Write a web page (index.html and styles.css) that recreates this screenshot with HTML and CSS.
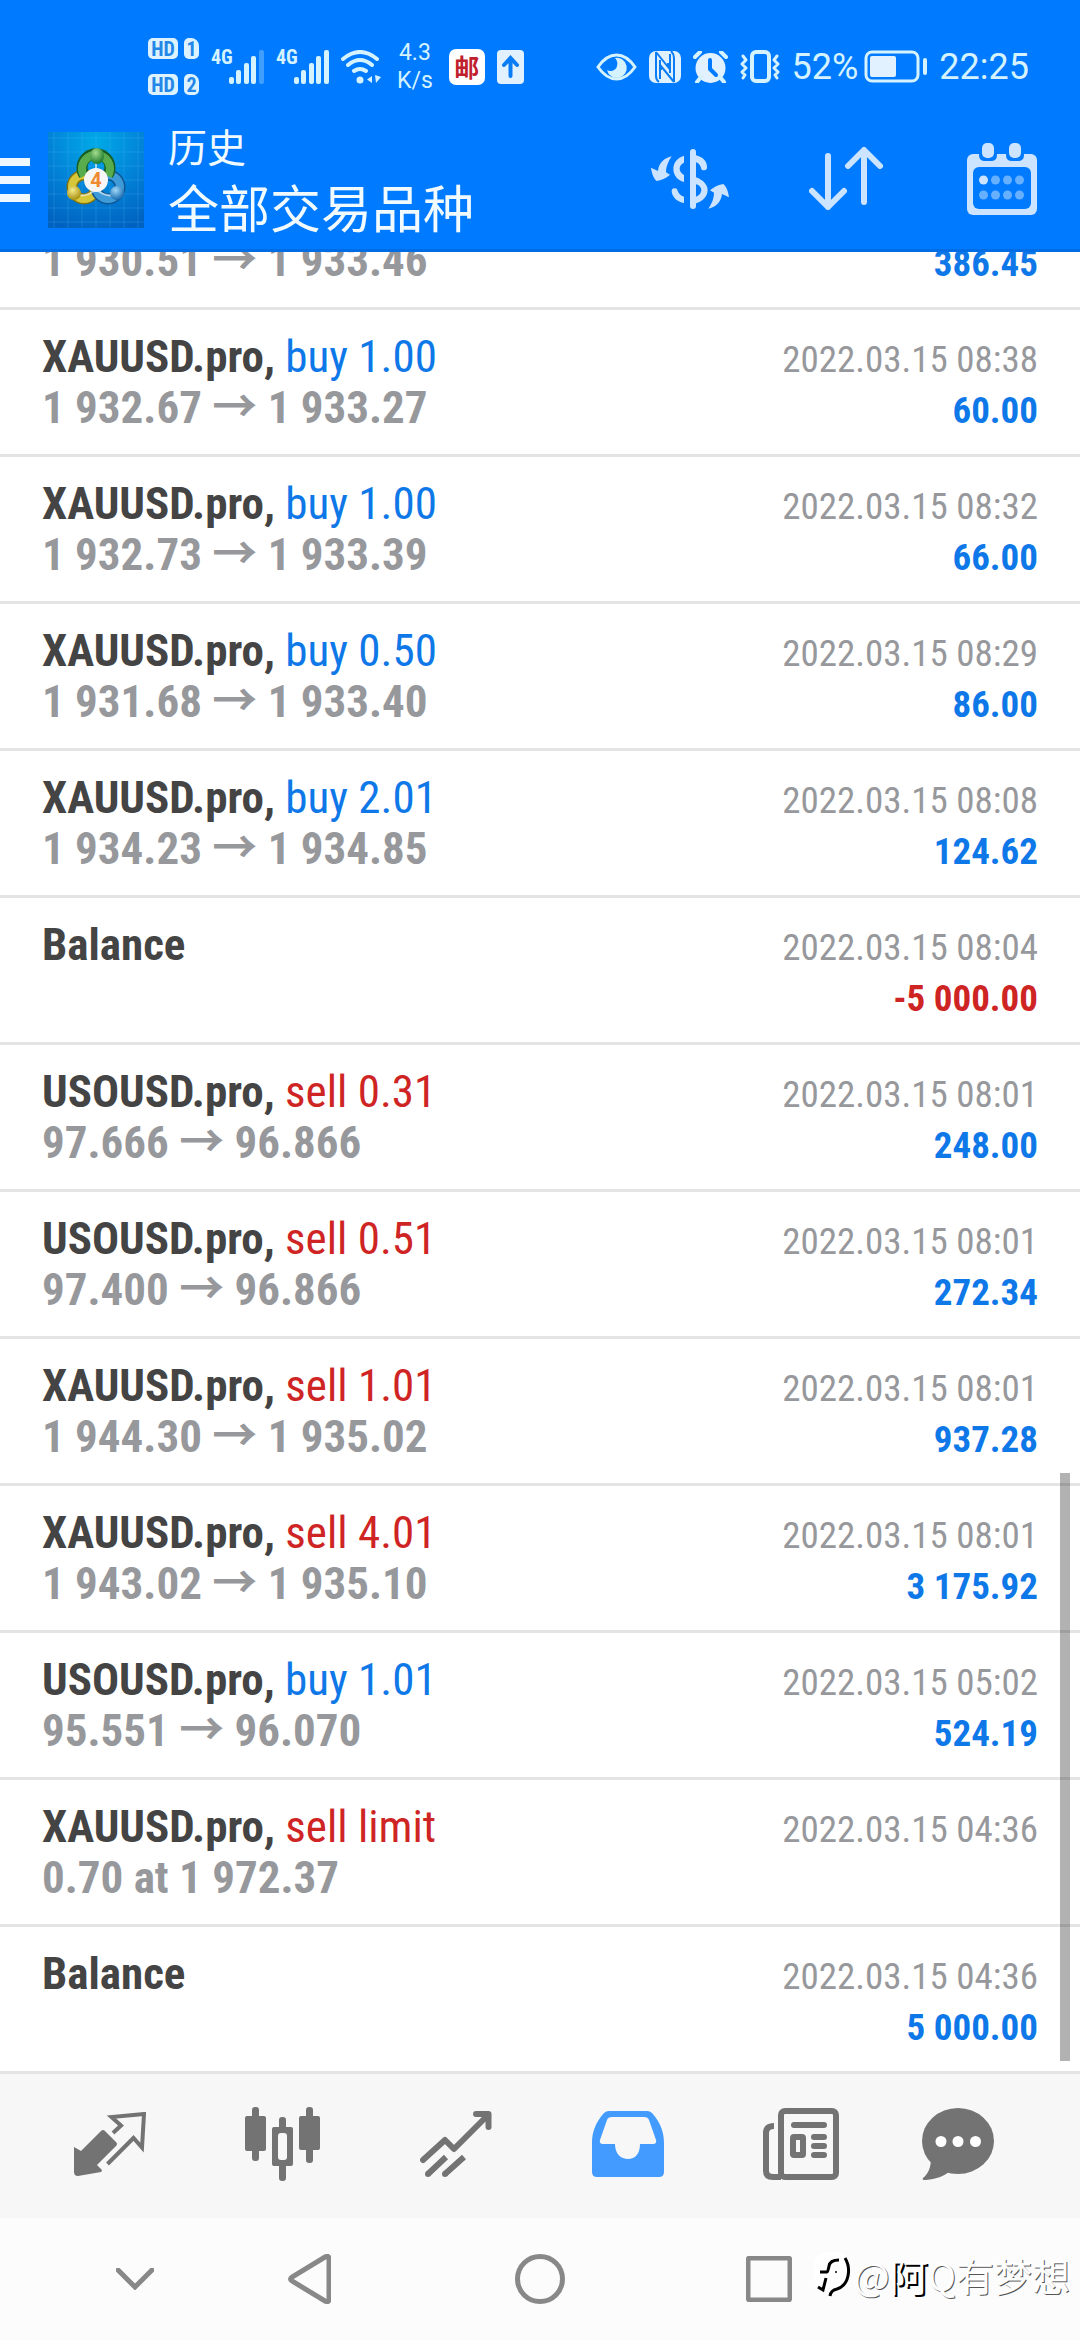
FILE: index.html
```html
<!DOCTYPE html>
<html lang="zh-CN">
<head>
<meta charset="utf-8">
<meta name="viewport" content="width=device-width">
<title>历史</title>
<link rel="stylesheet" href="styles.css">
</head>
<body>
<header class="header">
  <div class="status">
    <div class="status-group">
      <div class="hd-list">
        <div class="hd"><span class="hd-tag">HD</span><span class="hd-sim">1</span></div>
        <div class="hd"><span class="hd-tag">HD</span><span class="hd-sim">2</span></div>
      </div>
      <div class="signal"><span class="net">4G</span>
        <svg width="35" height="34" viewBox="0 0 35 34" fill="currentColor"><rect y="27" width="5" height="7" rx="2"/><rect x="7" y="20" width="5" height="14" rx="2"/><rect x="15" y="13" width="5" height="21" rx="2"/><rect x="22" y="6" width="5" height="28" rx="2"/><rect x="30" width="5" height="34" rx="2" opacity=".3"/></svg>
      </div>
      <div class="signal"><span class="net">4G</span>
        <svg width="35" height="34" viewBox="0 0 35 34" fill="currentColor"><rect y="27" width="5" height="7" rx="2"/><rect x="7" y="20" width="5" height="14" rx="2"/><rect x="15" y="13" width="5" height="21" rx="2"/><rect x="22" y="6" width="5" height="28" rx="2"/><rect x="30" width="5" height="34" rx="2"/></svg>
      </div>
      <svg width="40" height="34" viewBox="0 0 40 34" fill="none" stroke="currentColor" stroke-width="4" stroke-linecap="round"><path d="M2 9Q19-5 36 9M7 15Q19 5 31 15M13 21Q19 17 25 21"/><circle cx="19" cy="30" r="3.5" fill="currentColor" stroke="none"/><path d="M31 26v7l-5-3.500zM34 25l6 2-5 6z" fill="currentColor" stroke="none"/></svg>
      <div class="speed"><span>4.3</span><span>K/s</span></div>
      <span class="mail">邮</span>
      <svg width="27" height="34" viewBox="0 0 27 34"><rect width="27" height="34" rx="4" fill="#e2f1ff"/><path d="M13.500 26V9M7 15l6.500-7 6.500 7" fill="none" stroke="#0a7cf5" stroke-width="4" stroke-linecap="round"/></svg>
    </div>
    <div class="status-group">
      <svg width="41" height="28" viewBox="0 0 41 28"><path d="M2 14C13-2 28-2 39 14C28 30 13 30 2 14z" fill="none" stroke="currentColor" stroke-width="3"/><path d="M19 5a10 10 0 1 1-8 12c3 2 9 1 10-4c1-3 0-6-2-8z" fill="currentColor"/></svg>
      <svg width="32" height="32" viewBox="0 0 32 32"><rect width="32" height="32" rx="7" fill="#e0f2ff"/><path d="M7 1L19 16V12M7 1V25Q7 29 10 31M25 31L12 15V19M25 31V7Q25 3 22 0M11 9V28M21 3V22" fill="none" stroke="#0a7cf5" stroke-width="2"/></svg>
      <svg width="35" height="32" viewBox="0 0 35 32"><circle cx="17.500" cy="17" r="15" fill="#e2f1ff"/><path d="M2 6l5-5M33 6l-5-5M4 31l4-5M31 31l-4-5" stroke="currentColor" stroke-width="4" stroke-linecap="round"/><path d="M17 9v9l6 6" fill="none" stroke="#007aff" stroke-width="4" stroke-linecap="round" stroke-linejoin="round"/></svg>
      <svg width="40" height="33" viewBox="0 0 40 33" fill="none" stroke="currentColor" stroke-linecap="round" stroke-linejoin="round"><rect x="12" y="2" width="17" height="29" rx="4" stroke-width="4"/><path d="M3 6l3 4-4 4 4 4-4 4 3 3-2 3M37 6l-3 4 4 4-4 4 4 4-3 3 2 3" stroke-width="3"/></svg>
      <div class="battery"><span>52%</span>
        <svg width="63" height="33" viewBox="0 0 63 33"><rect x="2" y="2" width="52" height="29" rx="6" fill="none" stroke="currentColor" stroke-width="3"/><rect x="6" y="6" width="26" height="21" rx="2" fill="#e2f1ff"/><rect x="59" y="8" width="4" height="17" rx="2" fill="currentColor"/></svg>
      </div>
      <time>22:25</time>
    </div>
  </div>
  <div class="appbar">
    <button class="icon-button" aria-label="菜单"><svg width="30" height="44" viewBox="0 0 30 44" fill="#eff8ff"><path d="M0 0h30v8H0zM0 18h30v8H0zM0 36h30v8H0z"/></svg></button>
    <svg class="logo" width="96" height="96" viewBox="0 0 96 96">
      <defs>
        <radialGradient id="sky" cx=".5" cy=".1" r=".95"><stop offset="0" stop-color="#00aae8"/><stop offset=".5" stop-color="#0284d8"/><stop offset="1" stop-color="#0062c0"/></radialGradient>
        <radialGradient id="green" cx=".4" cy=".3" r=".7"><stop offset="0" stop-color="#a5dc8e"/><stop offset="1" stop-color="#1c7a2c"/></radialGradient>
        <radialGradient id="gold" cx=".4" cy=".3" r=".7"><stop offset="0" stop-color="#f4eb8c"/><stop offset="1" stop-color="#a88f10"/></radialGradient>
        <radialGradient id="blue" cx=".4" cy=".3" r=".7"><stop offset="0" stop-color="#9fd8f8"/><stop offset="1" stop-color="#1669b0"/></radialGradient>
      </defs>
      <path fill="url(#sky)" d="M0 0h96v96H0z"/>
      <path d="M6 0v96M20 0v96M34 0v96M48 0v96M62 0v96M76 0v96M90 0v96M0 6h96M0 20h96M0 34h96M0 48h96M0 62h96M0 76h96M0 90h96" stroke="#5cc0ff" stroke-opacity=".22"/>
      <g fill="none" stroke-width="8">
        <circle cx="36" cy="55" r="12" stroke="#84730c" stroke-width="11"/><circle cx="36" cy="55" r="12" stroke="#d5c63a"/>
        <circle cx="60" cy="55" r="12" stroke="#0f5591" stroke-width="11"/><circle cx="60" cy="55" r="12" stroke="#3f9bd8"/>
        <path d="M36 43A14 14 0 1 1 60 43" stroke="#175f22" stroke-width="11"/><path d="M36 44A14 14 0 1 1 60 44" stroke="#58ac4e"/>
      </g>
      <path d="M28 62q7 4 18-3M68 62q-7 4-18-3M48 27v12" fill="none" stroke="#fff" stroke-opacity=".6" stroke-width="2"/>
      <ellipse cx="49" cy="24" rx="7" ry="8" fill="url(#green)"/>
      <circle cx="26" cy="61" r="7" fill="url(#gold)"/>
      <circle cx="69" cy="61" r="7" fill="url(#blue)"/>
      <circle cx="48" cy="48" r="12" fill="#f6f6f6"/>
      <text class="logo-digit" x="48" y="55" text-anchor="middle">4</text>
    </svg>
    <div class="titles"><h1 class="title">历史</h1><p class="subtitle">全部交易品种</p></div>
    <div class="actions">
      <button class="icon-button" aria-label="交易品种"><svg width="78" height="60" viewBox="183 324 234 180" fill="#cce4ff"><rect x="300" y="324" width="18" height="180" rx="9"/><path id="swoosh" d="M245 346C225 350 206 365 204 390L183 380C185 395 190 412 200 420C213 418 228 412 240 401L228 394C228 375 236 360 245 346z"/><use href="#swoosh" transform="rotate(180 300 424.500)"/><path d="M282 344C262 350 250 365 250 383C250 402 262 417 282 423V402C274 398 269 390 269 383C269 375 274 368 282 365zM282 486C262 482 248 470 245 452a9 9 0 0 1 18-2C266 458 272 464 282 467zM318 343C338 348 351 360 351 378a9 9 0 0 1-18 2C330 372 326 366 318 364zM318 409C340 417 353 432 353 447C353 466 338 481 318 487V467C328 463 334 456 334 447C334 440 328 432 318 430z"/></svg></button>
      <button class="icon-button" aria-label="排序"><svg width="74" height="64" viewBox="0 0 74 64" fill="none" stroke="#cce4ff" stroke-width="6" stroke-linecap="round" stroke-linejoin="round"><path d="M19 9V60M3 44l16 16 16-16M55 55V4M39 19L55 3l16 16"/></svg></button>
      <button class="icon-button" aria-label="日期"><svg width="70" height="72" viewBox="0 0 70 72"><rect y="11" width="70" height="61" rx="6" fill="#cce4ff"/><path d="M12 10h18v2q0 6-6 6h-6q-6 0-6-6zM39 10h18v2q0 6-6 6h-6q-6 0-6-6z" fill="#007aff"/><rect x="15" width="12" height="15" rx="5" fill="#cce4ff"/><rect x="42" width="12" height="15" rx="5" fill="#cce4ff"/><rect x="6" y="24" width="58" height="42" rx="6" fill="#007aff"/><circle cx="16.500" cy="37" r="4.500" fill="#cce4ff"/><g fill="#66b0ff"><circle cx="28.500" cy="37" r="4.500"/><circle cx="40.500" cy="37" r="4.500"/><circle cx="52.500" cy="37" r="4.500"/><circle cx="16.500" cy="52" r="4.500"/><circle cx="28.500" cy="52" r="4.500"/><circle cx="40.500" cy="52" r="4.500"/><circle cx="52.500" cy="52" r="4.500"/></g></svg></button>
    </div>
  </div>
</header>

<main class="history">
  <ul class="deals">
    <li class="deal deal-partial"><div class="main"><p class="prices">1 930.51 → 1 933.46</p></div><div class="side"><strong class="buy">386.45</strong></div></li>
    <li class="deal"><div class="main"><p class="symbol">XAUUSD.pro, <span class="buy">buy 1.00</span></p><p class="prices">1 932.67 → 1 933.27</p></div><div class="side"><time>2022.03.15 08:38</time><strong class="buy">60.00</strong></div></li>
    <li class="deal"><div class="main"><p class="symbol">XAUUSD.pro, <span class="buy">buy 1.00</span></p><p class="prices">1 932.73 → 1 933.39</p></div><div class="side"><time>2022.03.15 08:32</time><strong class="buy">66.00</strong></div></li>
    <li class="deal"><div class="main"><p class="symbol">XAUUSD.pro, <span class="buy">buy 0.50</span></p><p class="prices">1 931.68 → 1 933.40</p></div><div class="side"><time>2022.03.15 08:29</time><strong class="buy">86.00</strong></div></li>
    <li class="deal"><div class="main"><p class="symbol">XAUUSD.pro, <span class="buy">buy 2.01</span></p><p class="prices">1 934.23 → 1 934.85</p></div><div class="side"><time>2022.03.15 08:08</time><strong class="buy">124.62</strong></div></li>
    <li class="deal"><div class="main"><p class="symbol">Balance</p></div><div class="side"><time>2022.03.15 08:04</time><strong class="sell">-5 000.00</strong></div></li>
    <li class="deal"><div class="main"><p class="symbol">USOUSD.pro, <span class="sell">sell 0.31</span></p><p class="prices">97.666 → 96.866</p></div><div class="side"><time>2022.03.15 08:01</time><strong class="buy">248.00</strong></div></li>
    <li class="deal"><div class="main"><p class="symbol">USOUSD.pro, <span class="sell">sell 0.51</span></p><p class="prices">97.400 → 96.866</p></div><div class="side"><time>2022.03.15 08:01</time><strong class="buy">272.34</strong></div></li>
    <li class="deal"><div class="main"><p class="symbol">XAUUSD.pro, <span class="sell">sell 1.01</span></p><p class="prices">1 944.30 → 1 935.02</p></div><div class="side"><time>2022.03.15 08:01</time><strong class="buy">937.28</strong></div></li>
    <li class="deal"><div class="main"><p class="symbol">XAUUSD.pro, <span class="sell">sell 4.01</span></p><p class="prices">1 943.02 → 1 935.10</p></div><div class="side"><time>2022.03.15 08:01</time><strong class="buy">3 175.92</strong></div></li>
    <li class="deal"><div class="main"><p class="symbol">USOUSD.pro, <span class="buy">buy 1.01</span></p><p class="prices">95.551 → 96.070</p></div><div class="side"><time>2022.03.15 05:02</time><strong class="buy">524.19</strong></div></li>
    <li class="deal"><div class="main"><p class="symbol">XAUUSD.pro, <span class="sell">sell limit</span></p><p class="prices">0.70 at 1 972.37</p></div><div class="side"><time>2022.03.15 04:36</time></div></li>
    <li class="deal"><div class="main"><p class="symbol">Balance</p></div><div class="side"><time>2022.03.15 04:36</time><strong class="buy">5 000.00</strong></div></li>
  </ul>
  <div class="scrollbar"></div>
</main>

<nav class="tabs">
  <button class="icon-button" aria-label="行情"><svg width="72" height="64" viewBox="0 0 72 64"><path d="M39 21l8-7.500L37.500 5 70 2l-2 33.500-8.500-9.500L33.500 52" fill="none" stroke="currentColor" stroke-width="4"/><path d="M27 19q2-2 4 0l11 11q2 2 0 4L23 53l5 5q0 1-1 2L4 64q-4 0-4-4V35l7 4z" fill="currentColor"/></svg></button>
  <button class="icon-button" aria-label="图表"><svg width="75" height="74" viewBox="0 0 75 74" fill="currentColor"><rect y="9" width="21" height="35" rx="2"/><rect x="7" width="7" height="54" rx="3"/><rect x="27" y="20" width="21" height="39" rx="2"/><rect x="34" y="10" width="7" height="64" rx="3"/><rect x="33" y="26" width="9" height="27" rx="3" fill="#f7f7f7"/><rect x="54" y="9" width="21" height="34" rx="2"/><rect x="61" width="7" height="56" rx="3"/></svg></button>
  <button class="icon-button" aria-label="交易"><svg width="72" height="66" viewBox="0 0 72 66" fill="none" stroke="currentColor" stroke-width="6"><path d="M3 49l22-20 9 9L68 4M56 3h12.500v13" stroke-linecap="round" stroke-linejoin="round"/><path d="M8 63l18-17M25 63l19-17"/><g fill="currentColor" stroke="none"><circle cx="8" cy="63" r="3"/><circle cx="25" cy="63" r="3"/></g></svg></button>
  <button class="icon-button active" aria-label="历史"><svg width="72" height="66" viewBox="0 0 72 66" fill="currentColor"><path fill-rule="evenodd" d="M12 2Q14 0 17 0H55Q58 0 60 2C69 12 72 22 72 32V61Q72 66 67 66H5Q0 66 0 61V32C0 22 3 12 12 2zM20 6Q16 6 15 9L8 29Q7 33 11 33H23C23 43 29 48 36 48C43 48 48 43 48 33H61Q65 33 64 29L57 9Q56 6 52 6z"/></svg></button>
  <button class="icon-button" aria-label="新闻"><svg width="76" height="72" viewBox="0 0 76 72" fill="none" stroke="currentColor" stroke-width="6"><rect x="18" y="3" width="55" height="66" rx="4"/><path d="M11 18Q3 18 3 25V63Q3 69 10 69H18"/><rect x="30" y="29" width="10" height="18" rx="1"/><path d="M31 17h30M51 29h10M51 38h10M51 47h10" stroke-linecap="round"/></svg></button>
  <button class="icon-button" aria-label="消息"><svg width="72" height="72" viewBox="0 0 72 72" fill="currentColor"><ellipse cx="36" cy="33" rx="36" ry="33"/><path d="M9 50C9 60 6 66 1 70C0 72 2 72 4 72C14 71 20 69 27 64z"/><g fill="#fff"><circle cx="19" cy="33.500" r="5.500"/><circle cx="36" cy="33.500" r="5.500"/><circle cx="53.500" cy="33.500" r="5.500"/></g></svg></button>
</nav>

<footer class="system">
  <button class="icon-button" aria-label="收起"><svg width="38" height="22" viewBox="0 0 38 22"><path d="M2 2l17 17L36 2"/></svg></button>
  <button class="icon-button" aria-label="返回"><svg width="43" height="50" viewBox="0 0 43 50"><path d="M37 3Q41 1 41 5V45Q41 49 37 47L4 27Q1 25 4 23z"/></svg></button>
  <button class="icon-button" aria-label="主页"><svg width="50" height="50" viewBox="0 0 50 50"><circle cx="25" cy="25" r="22.500"/></svg></button>
  <button class="icon-button" aria-label="任务"><svg width="46" height="46" viewBox="0 0 46 46"><rect x="2" y="2" width="42" height="42" rx="2"/></svg></button>
  <div class="watermark">
    <svg width="40" height="46" viewBox="0 0 40 46"><rect width="36" height="38" rx="14" fill="#fff"/><path d="M31 6q5 8 3 18t-11 13q-6 1-7 7" fill="none" stroke="#000" stroke-width="3"/><path d="M25 8Q16 8 15 14T13 20H6M12 26l-3 12-5-3" fill="none" stroke="#000" stroke-width="3"/><circle cx="22" cy="20" r="1" fill="#000"/></svg>
    <span>@<span class="strong">阿</span>Q有梦想</span>
  </div>
</footer>
</body>
</html>
```
FILE: styles.css
```css
* { box-sizing: border-box; }
body {
  margin: 0;
  height: 100vh;
  display: flex;
  flex-direction: column;
  background: #fff;
  color: #444;
  font-family: "Roboto Condensed", "Roboto", "Noto Sans CJK SC", sans-serif;
}
h1, p, ul { margin: 0; padding: 0; font-weight: inherit; }
svg { display: block; flex: none; }
.icon-button {
  display: flex;
  align-items: center;
  justify-content: center;
  padding: 0;
  border: 0;
  background: none;
  color: inherit;
}

.header { background: #007aff; border-bottom: 3px solid #006de4; color: #d4f3ff; }

.status {
  display: flex;
  justify-content: space-between;
  min-height: 111px;
  padding: 22px 51px 0 148px;
  font-family: "Roboto", sans-serif;
  font-size: 36px;
  line-height: 42px;
}
.status-group { display: flex; align-items: center; gap: 12px; }
.hd-list { display: grid; gap: 15px; }
.hd { display: flex; gap: 6px; }
.hd-tag, .hd-sim {
  height: 21px;
  border-radius: 5px;
  background: #dcf3ff;
  color: #2387e8;
  font: 700 20px/22px "Roboto Condensed", sans-serif;
  text-align: center;
}
.hd-tag { width: 30px; }
.hd-sim { width: 15px; border-top-right-radius: 8px; }
.signal { display: flex; }
.net { width: 18px; font: 700 20px/30px "Roboto Condensed", sans-serif; margin-top: -8px; }
.speed { display: grid; margin: 0 4px; font-size: 23px; line-height: 28px; text-align: center; }
.mail {
  width: 36px;
  height: 36px;
  border-radius: 7px;
  background: #fff;
  color: #c0202c;
  font: 700 25px/34px "Noto Sans CJK SC", sans-serif;
  text-align: center;
}
.battery { display: flex; align-items: center; gap: 6px; }

.appbar { display: flex; align-items: center; min-height: 138px; }
.logo { margin: 0 24px 0 18px; }
.logo-digit { font: 700 20px "Roboto", sans-serif; fill: #f08a30; }
.titles { color: #f0faff; font-family: "Noto Sans CJK SC", sans-serif; }
.title { font-size: 39px; line-height: 52px; }
.subtitle { font-size: 51px; line-height: 70px; }
.actions { display: grid; grid-template-columns: repeat(3, 156px); margin-left: auto; padding-bottom: 3px; }

.history {
  position: relative;
  flex: 1;
  min-height: 0;
  display: flex;
  flex-direction: column;
  justify-content: flex-end;
  overflow: hidden;
}
.deals { list-style: none; }
.deal {
  display: flex;
  justify-content: space-between;
  padding: 21px 42px;
  border-bottom: 3px solid #e4e4e4;
  line-height: 51px;
}
.deal-partial { padding-top: 0; }
.symbol { font-size: 45px; font-weight: 700; }
.symbol span { font-weight: 400; }
.prices { color: #97989c; font-size: 45px; font-weight: 700; }
.side {
  display: flex;
  flex-direction: column;
  padding-top: 3px;
  margin-bottom: -3px;
  font-size: 37px;
  text-align: right;
}
.side time { color: #97989c; }
.buy { color: #0f78e8; }
.sell { color: #cf2424; }
.scrollbar {
  position: absolute;
  right: 10px;
  bottom: 13px;
  width: 10px;
  height: 588px;
  background: rgba(0, 0, 0, .3);
}

.tabs {
  display: grid;
  grid-template-columns: repeat(5, 173fr) 142fr;
  align-items: center;
  min-height: 144px;
  padding: 0 51px 4px 24px;
  background: #f7f7f7;
  color: #737373;
}
.active { color: #439bff; }

.system {
  position: relative;
  display: grid;
  grid-template-columns: 174fr 174fr 288fr 170fr 226fr;
  align-items: center;
  min-height: 122px;
  padding-left: 48px;
  background: #fcfcfc;
}
.system button svg { fill: none; stroke: #888; stroke-width: 5; stroke-linecap: round; }
.watermark {
  position: absolute;
  right: 10px;
  bottom: 38px;
  display: flex;
  align-items: center;
  color: #fff;
  font: 38px/54px "Noto Sans CJK SC", sans-serif;
  text-shadow: 1px 1px 0 #555;
}
.strong { text-shadow: 2px 2px 0 #000; }
```
